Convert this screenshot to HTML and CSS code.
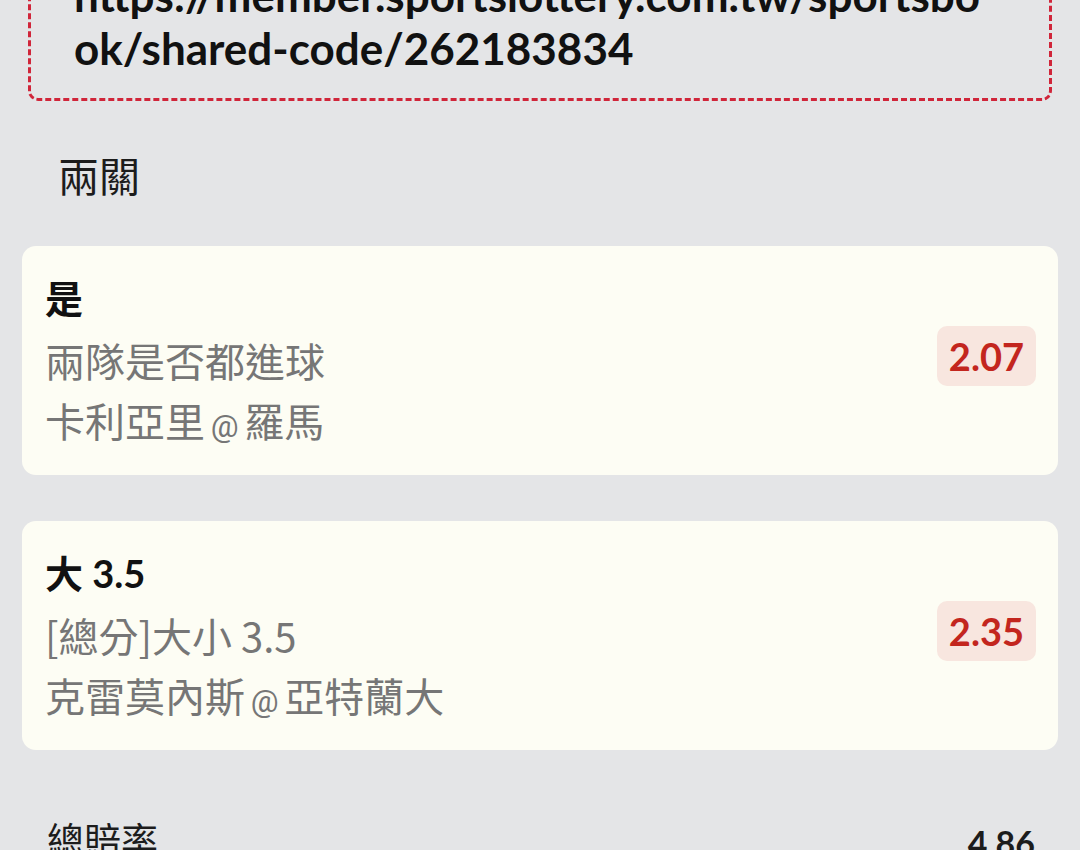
FILE: index.html
```html
<!DOCTYPE html>
<html lang="zh-Hant">
<head>
    <meta charset="UTF-8">
    <meta name="viewport" content="width=device-width, initial-scale=1.0">
    <title>分享投注</title>
    <link rel="stylesheet" href="styles.css">
</head>
<body>
    <div class="page">
        <div class="share-box">https://member.sportslottery.com.tw/sportsbook/shared-code/262183834</div>

        <h2 class="section-title">兩關</h2>

        <div class="bet-card">
            <div class="bet-info">
                <div class="bet-pick">是</div>
                <div class="bet-line">兩隊是否都進球</div>
                <div class="bet-line">卡利亞里<span class="at"> @ </span>羅馬</div>
            </div>
            <div class="odds">2.07</div>
        </div>

        <div class="bet-card">
            <div class="bet-info">
                <div class="bet-pick">大 3.5</div>
                <div class="bet-line">[總分]大小 3.5</div>
                <div class="bet-line">克雷莫內斯<span class="at"> @ </span>亞特蘭大</div>
            </div>
            <div class="odds">2.35</div>
        </div>

        <div class="total-row">
            <span class="total-label">總賠率</span>
            <span class="total-value">4.86</span>
        </div>
    </div>
</body>
</html>
```

FILE: styles.css
```css
body {
    margin: 0;
    background: #e4e5e7;
    font-family: Roboto, "Noto Sans CJK TC", sans-serif;
    color: #1a1a1a;
    overflow: hidden;
}
.page {
    padding: 0 22px;
}
.share-box {
    margin: -58px 6px 0;
    padding: 24px 56px 23px 43px;
    border: 3px dashed #d0253a;
    border-radius: 10px;
    font-family: Lato, "Noto Sans CJK TC", sans-serif;
    font-weight: 700;
    font-size: 44px;
    line-height: 1.2;
    color: #111;
    word-break: break-all;
}
.section-title {
    margin: 47px 0 38px 36px;
    font-size: 41px;
    font-weight: 400;
    line-height: 60px;
    color: #1c1c1c;
}
.bet-card {
    display: flex;
    align-items: center;
    justify-content: space-between;
    background: #fdfdf4;
    border-radius: 14px;
    padding: 24px 22px 25px 23px;
    margin-bottom: 46px;
}
.bet-pick {
    margin-bottom: 4px;
    font-family: Lato, "Noto Sans CJK TC", sans-serif;
    font-weight: 700;
    font-size: 38px;
    line-height: 56px;
    color: #111;
}
.bet-line {
    height: 60px;
    font-family: "Noto Sans CJK TC", sans-serif;
    font-size: 40px;
    line-height: 60px;
    color: #767676;
}
.bet-line .at {
    font-family: Roboto, sans-serif;
    font-size: 31px;
    line-height: 1;
    word-spacing: -2px;
}
.odds {
    margin-bottom: 8px;
    padding: 0 12px;
    height: 60px;
    line-height: 60px;
    border-radius: 10px;
    background: #f8e6df;
    color: #c3261e;
    font-family: Lato, sans-serif;
    font-weight: 700;
    font-size: 38px;
}
.total-row {
    display: flex;
    justify-content: space-between;
    margin-top: 68px;
    padding: 0 23px 0 25px;
    line-height: 50px;
}
.total-label {
    font-size: 37px;
    color: #1c1c1c;
}
.total-value {
    font-family: Lato, sans-serif;
    font-weight: 700;
    font-size: 34px;
    color: #1c1c1c;
}
```
